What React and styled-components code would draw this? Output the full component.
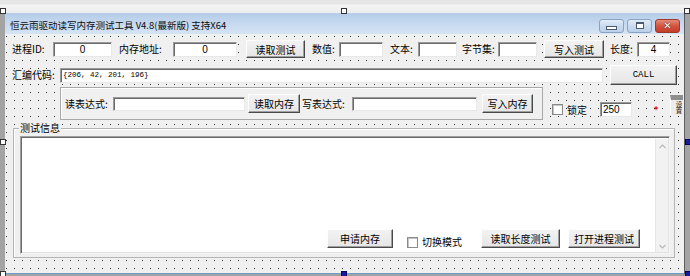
import React from 'react';
import styled, { createGlobalStyle } from 'styled-components';

const GlobalStyle = createGlobalStyle`
    html, body {
        margin: 0;
        padding: 0;
        background: #a3a3a3;
    }
    body {
        width: 690px;
        height: 276px;
        overflow: hidden;
        font-family: "Noto Sans CJK SC", "Noto Sans", sans-serif;
    }
`

const Screen = styled.div`
    position: relative;
    width: 690px;
    height: 276px;
    background: #a3a3a3;
    overflow: hidden;
`

const TopStrip = styled.div`
    height: 13px;
    background: linear-gradient(#e6e6e6 0, #e6e6e6 4px, #f4f4f4 5px, #ececec 100%);
`

const Handle = styled.span`
    position: absolute;
    left: ${p => p.$x}px;
    top: ${p => p.$y}px;
    width: 4px;
    height: 4px;
    border: 1px solid ${p => p.$dark ? '#000060' : '#333'};
    background: ${p => p.$dark ? '#1a1a9a' : '#fff'};
`

const Window = styled.div`
    margin-left: 5px;
    width: 679px;
    border-right: 1px solid #5e5e5e;
    display: flex;
    flex-direction: column;
`

const TitleBar = styled.div`
    height: 21px;
    display: flex;
    align-items: center;
    justify-content: space-between;
    padding: 0 4px 0 5px;
    background: linear-gradient(#b4cce8, #c9dbf0 60%, #d6e4f4);
`

const Title = styled.span`
    font-size: 9.5px;
    color: #0c0c0c;
    padding-top: 2px;
    white-space: nowrap;
`

const Controls = styled.div`
    display: flex;
    gap: 3px;
    margin-top: 4px;
`

const CtrlBtn = styled.div`
    width: 25px;
    height: 14px;
    box-sizing: border-box;
    border-radius: 3px;
    border: 1px solid ${p => p.$close ? '#9c3a2c' : '#8ba3c3'};
    background: ${p => p.$close
        ? 'linear-gradient(#e68a78, #d3543f 50%, #c23e2b)'
        : 'linear-gradient(#e2ecf8, #c9daef 50%, #bccfe8)'};
    display: flex;
    align-items: center;
    justify-content: center;
    color: #fff;
    font-family: "DejaVu Sans", sans-serif;
    font-size: 10px;
    font-weight: bold;
    text-shadow: 0 0 1px #5a1a10, 0 0 1px #5a1a10;
`

const MinGlyph = styled.span`
    width: 9px;
    height: 2px;
    border: 1px solid #4a5a70;
    background: #fff;
    margin-top: 4px;
`

const MaxGlyph = styled.span`
    width: 6px;
    height: 5px;
    border: 1px solid #4a5a70;
    box-shadow: inset 0 1px 0 #4a5a70;
    background: #fff;
`

const Body = styled.div`
    height: 233px;
    border-bottom: 1px solid #6e9cc8;
    padding: 6px 0 0 7px;
    box-sizing: content-box;
    overflow: hidden;
    display: flex;
    flex-direction: column;
    background-color: #f0f0f0;
    background-image:
        linear-gradient(to right, #f0f0f0 7px, transparent 7px),
        linear-gradient(to bottom, transparent 7px, #333 7px);
    background-size: 8px 8px;
    background-position: 2px 3px;
`

const Row = styled.div`
    display: flex;
    align-items: ${p => p.$top ? 'flex-start' : 'center'};
    height: ${p => p.$h}px;
    margin-top: ${p => p.$mt || 0}px;
`

const Label = styled.span`
    width: ${p => p.$w}px;
    padding-left: ${p => p.$pl || 0}px;
    margin-left: ${p => p.$ml || 0}px;
    flex-shrink: 0;
    font-size: 10px;
    line-height: 12px;
    color: #000;
    white-space: nowrap;
    background: ${p => p.$clear ? 'transparent' : '#f0f0f0'};
`

const Field = styled.input`
    width: ${p => p.$w}px;
    height: ${p => p.$h || 15}px;
    margin-left: ${p => p.$ml || 0}px;
    box-sizing: border-box;
    flex-shrink: 0;
    padding: 0 2px;
    border: 1px solid;
    border-color: #9a9a9a #e8e8e8 #e8e8e8 #9a9a9a;
    box-shadow: inset 1px 1px 0 #6a6a6a;
    background: #fff;
    font-family: ${p => p.$mono ? '"Liberation Mono", monospace' : '"Liberation Sans", sans-serif'};
    font-size: ${p => p.$mono ? 7.5 : 10}px;
    color: #000;
    text-align: ${p => p.$center ? 'center' : 'left'};
    outline: none;
`

const Button = styled.button`
    width: ${p => p.$w}px;
    height: ${p => p.$h || 18}px;
    margin-left: ${p => p.$ml || 0}px;
    flex-shrink: 0;
    box-sizing: border-box;
    padding: 0;
    border: 1px solid;
    border-color: #fdfdfd #4a4a4a #4a4a4a #fdfdfd;
    box-shadow: inset -1px -1px 0 #a0a0a0;
    background: linear-gradient(#f2f2f2, #e6e6e6);
    font-family: ${p => p.$mono ? '"Liberation Mono", monospace' : '"Noto Sans CJK SC", sans-serif'};
    font-size: ${p => p.$mono ? 9 : 10}px;
    color: #000;
    white-space: nowrap;
`

const Panel = styled.div`
    margin-left: 48px;
    width: 483px;
    height: 33px;
    box-sizing: border-box;
    flex-shrink: 0;
    display: flex;
    align-items: center;
    padding-left: 4px;
    border: 1px solid #a8a8a8;
    box-shadow: inset 1px 1px 0 #fff;
    background: #f0f0f0;
`

const Side = styled.div`
    display: flex;
    align-items: center;
    height: 15px;
    margin-top: 15px;
    margin-left: ${p => p.$ml}px;
`

const Check = styled.span`
    width: 9px;
    height: 9px;
    flex-shrink: 0;
    margin-left: ${p => p.$ml || 0}px;
    border: 1px solid #8a8a8a;
    box-shadow: inset 1px 1px 0 #c4c4c4;
    background: #fff;
`

const Mark = styled.span`
    margin-left: 22px;
    width: 6px;
    font-family: "DejaVu Sans", sans-serif;
    font-size: 8px;
    font-weight: bold;
    color: #e00000;
    line-height: 8px;
    margin-top: 2px;
`

const Stub = styled.div`
    margin: 8px 0 0 10px;
    width: 13px;
    height: 20px;
    box-sizing: border-box;
    overflow: hidden;
    border-top: 5px solid #8e8e8e;
    border-left: 1px solid #fff;
    background: #ececec;
    font-size: 6.5px;
    line-height: 8px;
    writing-mode: vertical-rl;
    color: #222;
    padding-top: 1px;
`

const Group = styled.div`
    position: relative;
    margin: 8px 0 0 1px;
    width: 662px;
    height: 130px;
    box-sizing: border-box;
    padding: 7px 4px 3px 6px;
    border: 1px solid #b4b4b4;
    box-shadow: inset 1px 1px 0 #fff;
    background: #f0f0f0;
`

const GroupLabel = styled.span`
    position: absolute;
    top: -7px;
    left: 5px;
    padding: 0 1px;
    font-size: 10px;
    line-height: 12px;
    background: #f0f0f0;
    color: #000;
`

const Log = styled.div`
    height: 118px;
    box-sizing: border-box;
    display: flex;
    border: 1px solid;
    border-color: #a0a0a0 #f4f4f4 #f4f4f4 #a0a0a0;
    box-shadow: inset 1px 1px 0 #6a6a6a, inset -1px -1px 0 #e2e2e2;
    background: #fff;
`

const LogBody = styled.div`
    flex: 1;
    display: flex;
    align-items: flex-end;
    justify-content: flex-end;
    padding: 0 15px 5px 0;
`

const Scroll = styled.div`
    width: 12px;
    margin: 2px 1px 1px 0;
    background: #f2f2f2;
    border-left: 1px solid #e6e6e6;
    display: flex;
    flex-direction: column;
    justify-content: space-between;
    align-items: center;
    padding: 5px 0 3px;
`

const Chevron = ({ down }) => (
    <svg width="7" height="5" viewBox="0 0 7 5">
        <polyline
            points={down ? '0.5,1 3.5,4 6.5,1' : '0.5,4 3.5,1 6.5,4'}
            fill="none"
            stroke="#b8b8b8"
            strokeWidth="1.2"
        />
    </svg>
)

export default function App() {
    return (
        <Screen>
            <GlobalStyle />
            <TopStrip />
            <Window>
                <TitleBar>
                    <Title>恒云雨驱动读写内存测试工具 V4.8(最新版) 支持X64</Title>
                    <Controls>
                        <CtrlBtn><MinGlyph /></CtrlBtn>
                        <CtrlBtn><MaxGlyph /></CtrlBtn>
                        <CtrlBtn $close>✕</CtrlBtn>
                    </Controls>
                </TitleBar>
                <Body>
                    <Row $h={18}>
                        <Label $w={41}>进程ID:</Label>
                        <Field $w={59} $center readOnly value="0" />
                        <Label $w={54} $pl={7}>内存地址:</Label>
                        <Field $w={64} $center readOnly value="0" />
                        <Button $w={59} $ml={9}>读取测试</Button>
                        <Label $w={27} $pl={7}>数值:</Label>
                        <Field $w={44} readOnly value="" />
                        <Label $w={28} $pl={7}>文本:</Label>
                        <Field $w={39} readOnly value="" />
                        <Label $w={36} $pl={5}>字节集:</Label>
                        <Field $w={39} readOnly value="" />
                        <Button $w={60} $ml={7}>写入测试</Button>
                        <Label $w={27} $pl={6}>长度:</Label>
                        <Field $w={33} $center readOnly value="4" />
                    </Row>
                    <Row $h={20} $mt={7}>
                        <Label $w={48}>汇编代码:</Label>
                        <Field $w={543} $mono readOnly value="{206, 42, 201, 196}" />
                        <Button $w={67} $h={20} $ml={7} $mono>CALL</Button>
                    </Row>
                    <Row $h={33} $mt={2} $top>
                        <Panel>
                            <Label $w={48}>读表达式:</Label>
                            <Field $w={132} $h={14} readOnly value="" />
                            <Button $w={52} $h={19} $ml={3}>读取内存</Button>
                            <Label $w={50} $pl={2}>写表达式:</Label>
                            <Field $w={125} $h={14} readOnly value="" />
                            <Button $w={51} $h={19} $ml={5}>写入内存</Button>
                        </Panel>
                        <Side $ml={9}>
                            <Check />
                            <Label $w={20} $ml={4}>锁定</Label>
                            <Field $w={32} $ml={13} readOnly value="250" />
                            <Mark>*</Mark>
                        </Side>
                        <Stub>设置</Stub>
                    </Row>
                    <Group>
                        <GroupLabel>测试信息</GroupLabel>
                        <Log>
                            <LogBody>
                                <Button $w={66} $h={19}>申请内存</Button>
                                <Check $ml={14} />
                                <Label $w={42} $ml={4} $clear>切换模式</Label>
                                <Button $w={79} $h={19} $ml={17}>读取长度测试</Button>
                                <Button $w={72} $h={19} $ml={8}>打开进程测试</Button>
                            </LogBody>
                            <Scroll>
                                <Chevron />
                                <Chevron down />
                            </Scroll>
                        </Log>
                    </Group>
                </Body>
            </Window>
            <Handle $x={0} $y={8} />
            <Handle $x={341} $y={8} />
            <Handle $x={684} $y={8} />
            <Handle $x={0} $y={139} />
            <Handle $x={685} $y={139} $dark />
            <Handle $x={0} $y={271} />
            <Handle $x={341} $y={271} $dark />
            <Handle $x={685} $y={271} $dark />
        </Screen>
    )
}
